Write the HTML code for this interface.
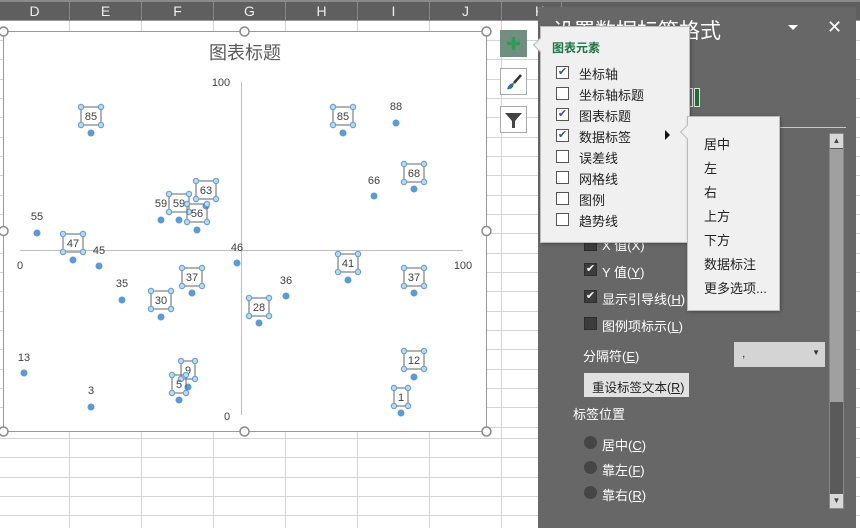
<!DOCTYPE html>
<html><head><meta charset="utf-8"><style>
*{margin:0;padding:0;box-sizing:border-box}
body{width:860px;height:528px;overflow:hidden;background:#fff;position:relative;font-family:"Liberation Sans","Noto Sans CJK SC",sans-serif}
.a{position:absolute;white-space:nowrap}
.hdr{left:0;top:0;width:860px;height:21px;background:#5f5f5f;border-top:2px solid #8a8a8a;border-bottom:1px solid #9a9a9a}
.col{top:2px;height:19px;color:#eee;font-size:14px;text-align:center;line-height:19px;border-right:1px solid #888}
.panel{left:538px;top:7px;width:318px;height:521px;background:#676767;color:#fff}
.pt{font-size:13px;color:#fff}
.cb{width:13px;height:13px;background:#3c3c3c;border:1px solid #2e2e2e}
.pop{background:#f0f0f0;border:1px solid #bbb;box-shadow:1px 1px 3px rgba(0,0,0,.3)}
.it{font-size:13px;color:#222}
.wcb{width:13px;height:13px;border:1px solid #555;background:#fff}
</style></head><body>
<svg class="a" style="left:0;top:0" width="860" height="528">
<g stroke="#d4d4d4" stroke-width="1">
<line x1="0" y1="438.5" x2="860" y2="438.5"/><line x1="0" y1="457.5" x2="860" y2="457.5"/><line x1="0" y1="477.5" x2="860" y2="477.5"/><line x1="0" y1="496.5" x2="860" y2="496.5"/><line x1="0" y1="515.5" x2="860" y2="515.5"/>
<line x1="0" y1="40.5" x2="860" y2="40.5"/><line x1="0" y1="59.5" x2="860" y2="59.5"/><line x1="0" y1="79.5" x2="860" y2="79.5"/><line x1="0" y1="98.5" x2="860" y2="98.5"/><line x1="0" y1="117.5" x2="860" y2="117.5"/><line x1="0" y1="137.5" x2="860" y2="137.5"/><line x1="0" y1="156.5" x2="860" y2="156.5"/><line x1="0" y1="175.5" x2="860" y2="175.5"/><line x1="0" y1="195.5" x2="860" y2="195.5"/><line x1="0" y1="214.5" x2="860" y2="214.5"/><line x1="0" y1="233.5" x2="860" y2="233.5"/><line x1="0" y1="253.5" x2="860" y2="253.5"/><line x1="0" y1="272.5" x2="860" y2="272.5"/><line x1="0" y1="291.5" x2="860" y2="291.5"/><line x1="0" y1="311.5" x2="860" y2="311.5"/><line x1="0" y1="330.5" x2="860" y2="330.5"/><line x1="0" y1="349.5" x2="860" y2="349.5"/><line x1="0" y1="369.5" x2="860" y2="369.5"/><line x1="0" y1="388.5" x2="860" y2="388.5"/><line x1="0" y1="407.5" x2="860" y2="407.5"/><line x1="0" y1="427.5" x2="860" y2="427.5"/>
<line x1="69.5" y1="20" x2="69.5" y2="528"/><line x1="141.5" y1="20" x2="141.5" y2="528"/><line x1="213.5" y1="20" x2="213.5" y2="528"/><line x1="285.5" y1="20" x2="285.5" y2="528"/><line x1="357.5" y1="20" x2="357.5" y2="528"/><line x1="429.5" y1="20" x2="429.5" y2="528"/><line x1="501.5" y1="20" x2="501.5" y2="528"/>
</g>
<rect x="3.5" y="31.5" width="483" height="400" fill="#fff" stroke="#9a9a9a"/>
<text x="245" y="59" font-size="18" fill="#595959" text-anchor="middle" font-family="Liberation Sans,Noto Sans CJK SC,sans-serif">图表标题</text>
<line x1="241.5" y1="82" x2="241.5" y2="415" stroke="#bfbfbf"/>
<line x1="20" y1="250.5" x2="463" y2="250.5" stroke="#bfbfbf"/>
<g font-size="11" fill="#404040" font-family="Liberation Sans,sans-serif" text-anchor="middle">
<text x="221" y="86">100</text><text x="227" y="420">0</text><text x="20" y="269">0</text><text x="463" y="269">100</text>
<text x="37" y="220">55</text><text x="99" y="254">45</text><text x="122" y="287">35</text><text x="161" y="207">59</text><text x="237" y="251">46</text><text x="286" y="284">36</text><text x="24" y="361">13</text><text x="91" y="394">3</text><text x="396" y="110">88</text><text x="374" y="184">66</text>
</g>
<g fill="#5b9bd5">
<circle cx="91" cy="133" r="3.5"/><circle cx="37" cy="233" r="3.5"/><circle cx="73" cy="260" r="3.5"/><circle cx="99" cy="266" r="3.5"/><circle cx="122" cy="300" r="3.5"/><circle cx="161" cy="317" r="3.5"/><circle cx="192" cy="293" r="3.5"/><circle cx="161" cy="220" r="3.5"/><circle cx="179" cy="220" r="3.5"/><circle cx="197" cy="230" r="3.5"/><circle cx="206" cy="206" r="3.5"/><circle cx="237" cy="263" r="3.5"/><circle cx="259" cy="323" r="3.5"/><circle cx="286" cy="296" r="3.5"/><circle cx="24" cy="373" r="3.5"/><circle cx="91" cy="407" r="3.5"/><circle cx="188" cy="387" r="3.5"/><circle cx="179" cy="400" r="3.5"/><circle cx="343" cy="133" r="3.5"/><circle cx="396" cy="123" r="3.5"/><circle cx="374" cy="196" r="3.5"/><circle cx="414" cy="189" r="3.5"/><circle cx="348" cy="280" r="3.5"/><circle cx="414" cy="293" r="3.5"/><circle cx="414" cy="377" r="3.5"/><circle cx="401" cy="413" r="3.5"/>
</g>
<g font-size="11" fill="#404040" font-family="Liberation Sans,sans-serif" text-anchor="middle">
<g transform="translate(91,116)"><rect x="-10" y="-9" width="20" height="18" fill="none" stroke="#666"/><text y="4">85</text><g fill="#bdd7ee" stroke="#5b9bd5"><circle cx="-10" cy="-9" r="2.7"/><circle cx="10" cy="-9" r="2.7"/><circle cx="-10" cy="9" r="2.7"/><circle cx="10" cy="9" r="2.7"/></g></g>
<g transform="translate(73,243)"><rect x="-10" y="-9" width="20" height="18" fill="none" stroke="#666"/><text y="4">47</text><g fill="#bdd7ee" stroke="#5b9bd5"><circle cx="-10" cy="-9" r="2.7"/><circle cx="10" cy="-9" r="2.7"/><circle cx="-10" cy="9" r="2.7"/><circle cx="10" cy="9" r="2.7"/></g></g>
<g transform="translate(161,300)"><rect x="-10" y="-9" width="20" height="18" fill="none" stroke="#666"/><text y="4">30</text><g fill="#bdd7ee" stroke="#5b9bd5"><circle cx="-10" cy="-9" r="2.7"/><circle cx="10" cy="-9" r="2.7"/><circle cx="-10" cy="9" r="2.7"/><circle cx="10" cy="9" r="2.7"/></g></g>
<g transform="translate(192,277)"><rect x="-10" y="-9" width="20" height="18" fill="none" stroke="#666"/><text y="4">37</text><g fill="#bdd7ee" stroke="#5b9bd5"><circle cx="-10" cy="-9" r="2.7"/><circle cx="10" cy="-9" r="2.7"/><circle cx="-10" cy="9" r="2.7"/><circle cx="10" cy="9" r="2.7"/></g></g>
<g transform="translate(179,203)"><rect x="-10" y="-9" width="20" height="18" fill="none" stroke="#666"/><text y="4">59</text><g fill="#bdd7ee" stroke="#5b9bd5"><circle cx="-10" cy="-9" r="2.7"/><circle cx="10" cy="-9" r="2.7"/><circle cx="-10" cy="9" r="2.7"/><circle cx="10" cy="9" r="2.7"/></g></g>
<g transform="translate(197,213)"><rect x="-10" y="-9" width="20" height="18" fill="none" stroke="#666"/><text y="4">56</text><g fill="#bdd7ee" stroke="#5b9bd5"><circle cx="-10" cy="-9" r="2.7"/><circle cx="10" cy="-9" r="2.7"/><circle cx="-10" cy="9" r="2.7"/><circle cx="10" cy="9" r="2.7"/></g></g>
<g transform="translate(206,190)"><rect x="-10" y="-9" width="20" height="18" fill="none" stroke="#666"/><text y="4">63</text><g fill="#bdd7ee" stroke="#5b9bd5"><circle cx="-10" cy="-9" r="2.7"/><circle cx="10" cy="-9" r="2.7"/><circle cx="-10" cy="9" r="2.7"/><circle cx="10" cy="9" r="2.7"/></g></g>
<g transform="translate(259,307)"><rect x="-10" y="-9" width="20" height="18" fill="none" stroke="#666"/><text y="4">28</text><g fill="#bdd7ee" stroke="#5b9bd5"><circle cx="-10" cy="-9" r="2.7"/><circle cx="10" cy="-9" r="2.7"/><circle cx="-10" cy="9" r="2.7"/><circle cx="10" cy="9" r="2.7"/></g></g>
<g transform="translate(188,370)"><rect x="-7" y="-9" width="14" height="18" fill="none" stroke="#666"/><text y="4">9</text><g fill="#bdd7ee" stroke="#5b9bd5"><circle cx="-7" cy="-9" r="2.7"/><circle cx="7" cy="-9" r="2.7"/><circle cx="-7" cy="9" r="2.7"/><circle cx="7" cy="9" r="2.7"/></g></g>
<g transform="translate(179,384)"><rect x="-7" y="-9" width="14" height="18" fill="none" stroke="#666"/><text y="4">5</text><g fill="#bdd7ee" stroke="#5b9bd5"><circle cx="-7" cy="-9" r="2.7"/><circle cx="7" cy="-9" r="2.7"/><circle cx="-7" cy="9" r="2.7"/><circle cx="7" cy="9" r="2.7"/></g></g>
<g transform="translate(343,116)"><rect x="-10" y="-9" width="20" height="18" fill="none" stroke="#666"/><text y="4">85</text><g fill="#bdd7ee" stroke="#5b9bd5"><circle cx="-10" cy="-9" r="2.7"/><circle cx="10" cy="-9" r="2.7"/><circle cx="-10" cy="9" r="2.7"/><circle cx="10" cy="9" r="2.7"/></g></g>
<g transform="translate(414,173)"><rect x="-10" y="-9" width="20" height="18" fill="none" stroke="#666"/><text y="4">68</text><g fill="#bdd7ee" stroke="#5b9bd5"><circle cx="-10" cy="-9" r="2.7"/><circle cx="10" cy="-9" r="2.7"/><circle cx="-10" cy="9" r="2.7"/><circle cx="10" cy="9" r="2.7"/></g></g>
<g transform="translate(348,263)"><rect x="-10" y="-9" width="20" height="18" fill="none" stroke="#666"/><text y="4">41</text><g fill="#bdd7ee" stroke="#5b9bd5"><circle cx="-10" cy="-9" r="2.7"/><circle cx="10" cy="-9" r="2.7"/><circle cx="-10" cy="9" r="2.7"/><circle cx="10" cy="9" r="2.7"/></g></g>
<g transform="translate(414,277)"><rect x="-10" y="-9" width="20" height="18" fill="none" stroke="#666"/><text y="4">37</text><g fill="#bdd7ee" stroke="#5b9bd5"><circle cx="-10" cy="-9" r="2.7"/><circle cx="10" cy="-9" r="2.7"/><circle cx="-10" cy="9" r="2.7"/><circle cx="10" cy="9" r="2.7"/></g></g>
<g transform="translate(414,360)"><rect x="-10" y="-9" width="20" height="18" fill="none" stroke="#666"/><text y="4">12</text><g fill="#bdd7ee" stroke="#5b9bd5"><circle cx="-10" cy="-9" r="2.7"/><circle cx="10" cy="-9" r="2.7"/><circle cx="-10" cy="9" r="2.7"/><circle cx="10" cy="9" r="2.7"/></g></g>
<g transform="translate(401,397)"><rect x="-7" y="-9" width="14" height="18" fill="none" stroke="#666"/><text y="4">1</text><g fill="#bdd7ee" stroke="#5b9bd5"><circle cx="-7" cy="-9" r="2.7"/><circle cx="7" cy="-9" r="2.7"/><circle cx="-7" cy="9" r="2.7"/><circle cx="7" cy="9" r="2.7"/></g></g>
</g>
<g fill="#fff" stroke="#8a8a8a" stroke-width="1.5">
<circle cx="3.5" cy="31.5" r="4.5"/><circle cx="244.5" cy="31.5" r="4.5"/><circle cx="486.5" cy="31.5" r="4.5"/><circle cx="3.5" cy="231" r="4.5"/><circle cx="486.5" cy="231" r="4.5"/><circle cx="3.5" cy="431.5" r="4.5"/><circle cx="244.5" cy="431.5" r="4.5"/><circle cx="486.5" cy="431.5" r="4.5"/>
</g>
<rect x="500" y="30" width="27" height="27" fill="#6f9080"/>
<path d="M513.5 37v13M507 43.5h13" stroke="#2e9b58" stroke-width="3.5"/>
<rect x="500.5" y="68.5" width="26" height="26" fill="#fff" stroke="#aaa"/>
<path d="M507 89q2-6 7-6l-1 4q-3 3-6 2z" fill="#2f6db3"/><path d="M514 83l7-8" stroke="#333" stroke-width="2.5"/>
<rect x="500.5" y="106.5" width="26" height="26" fill="#fff" stroke="#aaa"/>
<path d="M505 113h17l-7 8v7h-3v-7z" fill="#444"/>
</svg>
<div class="a hdr"></div>
<div class="a col" style="left:0;width:70px">D</div>
<div class="a col" style="left:70px;width:72px">E</div>
<div class="a col" style="left:142px;width:72px">F</div>
<div class="a col" style="left:214px;width:72px">G</div>
<div class="a col" style="left:286px;width:72px">H</div>
<div class="a col" style="left:358px;width:72px">I</div>
<div class="a col" style="left:430px;width:72px">J</div>
<div class="a col" style="left:502px;width:60px;text-align:left;padding-left:33px">K</div>

<div class="a panel">
<div class="a" style="left:15px;top:8px;font-size:21px;color:#fff">设置数据标签格式</div>
<div class="a" style="left:250px;top:18px;width:0;height:0;border-left:5px solid transparent;border-right:5px solid transparent;border-top:5px solid #fff"></div>
<div class="a" style="left:289px;top:10px;font-size:18px;color:#fff">✕</div>
<div class="a" style="left:150px;top:81px;width:5px;height:19px;border:1px solid #ddd"></div>
<div class="a" style="left:156px;top:81px;width:6px;height:19px;background:#1e6b3c;border:1px solid #ddd"></div>
<div class="a" style="left:145px;top:120px;width:163px;height:1px;background:#c8c8c8"></div>
<div class="a" style="left:291px;top:126px;width:15px;height:376px;background:#5a5a5a;border:1px solid #888"></div>
<div class="a" style="left:292px;top:142px;width:13px;height:253px;background:#a0a0a0"></div>
<div class="a" style="left:292px;top:127px;width:13px;height:14px;background:#d8d8d8;color:#444;font-size:8px;text-align:center;line-height:14px">▲</div>
<div class="a" style="left:292px;top:487px;width:13px;height:14px;background:#d8d8d8;color:#444;font-size:8px;text-align:center;line-height:14px">▼</div>
<div class="a cb" style="left:46px;top:231px"></div><div class="a pt" style="left:64px;top:228px">X 值(X)</div>
<div class="a cb" style="left:46px;top:256px;color:#fff;font-size:11px;line-height:11px;text-align:center">✔</div><div class="a pt" style="left:64px;top:255px">Y 值(<u>Y</u>)</div>
<div class="a cb" style="left:46px;top:283px;color:#fff;font-size:11px;line-height:11px;text-align:center">✔</div><div class="a pt" style="left:64px;top:282px">显示引导线(<u>H</u>)</div>
<div class="a cb" style="left:46px;top:310px"></div><div class="a pt" style="left:64px;top:309px">图例项标示(<u>L</u>)</div>
<div class="a pt" style="left:45px;top:339px">分隔符(<u>E</u>)</div>
<div class="a" style="left:196px;top:335px;width:91px;height:25px;background:#d4d4d4;color:#333;font-size:12px;padding:4px 8px">,<span style="position:absolute;right:5px;top:6px;font-size:8px">▼</span></div>
<div class="a" style="left:46px;top:366px;width:105px;height:24px;background:#e1e1e1;color:#222;font-size:12.5px;padding:4px 0 0 8px">重设标签文本(<u>R</u>)</div>
<div class="a pt" style="left:35px;top:397px">标签位置</div>
<div class="a" style="left:46px;top:429px;width:13px;height:13px;border-radius:50%;background:#454545"></div><div class="a pt" style="left:64px;top:428px">居中(<u>C</u>)</div>
<div class="a" style="left:46px;top:454px;width:13px;height:13px;border-radius:50%;background:#454545"></div><div class="a pt" style="left:64px;top:453px">靠左(<u>F</u>)</div>
<div class="a" style="left:46px;top:479px;width:13px;height:13px;border-radius:50%;background:#454545"></div><div class="a pt" style="left:64px;top:478px">靠右(<u>R</u>)</div>
</div>

<div class="a pop" style="left:540px;top:26px;width:150px;height:217px">
<div class="a" style="left:11px;top:12px;font-size:12px;font-weight:bold;color:#217346">图表元素</div>
<div class="a wcb" style="left:15px;top:39px;color:#2b579a;font-size:11px;line-height:11px;text-align:center">✔</div><div class="a it" style="left:38px;top:37px">坐标轴</div>
<div class="a wcb" style="left:15px;top:60px"></div><div class="a it" style="left:38px;top:58px">坐标轴标题</div>
<div class="a wcb" style="left:15px;top:81px;color:#2b579a;font-size:11px;line-height:11px;text-align:center">✔</div><div class="a it" style="left:38px;top:79px">图表标题</div>
<div class="a wcb" style="left:15px;top:102px;color:#2b579a;font-size:11px;line-height:11px;text-align:center">✔</div><div class="a it" style="left:38px;top:100px">数据标签</div>
<div class="a" style="left:124px;top:103px;width:0;height:0;border-top:5px solid transparent;border-bottom:5px solid transparent;border-left:5px solid #111"></div>
<div class="a wcb" style="left:15px;top:123px"></div><div class="a it" style="left:38px;top:121px">误差线</div>
<div class="a wcb" style="left:15px;top:144px"></div><div class="a it" style="left:38px;top:142px">网格线</div>
<div class="a wcb" style="left:15px;top:165px"></div><div class="a it" style="left:38px;top:163px">图例</div>
<div class="a wcb" style="left:15px;top:186px"></div><div class="a it" style="left:38px;top:184px">趋势线</div>
</div>
<div class="a" style="left:535px;top:40px;width:10px;height:10px;background:#f0f0f0;border-left:1px solid #bbb;border-bottom:1px solid #bbb;transform:rotate(45deg)"></div>

<div class="a pop" style="left:687px;top:116px;width:93px;height:195px">
<div class="a it" style="left:16px;top:17px">居中</div>
<div class="a it" style="left:16px;top:41px">左</div>
<div class="a it" style="left:16px;top:65px">右</div>
<div class="a it" style="left:16px;top:89px">上方</div>
<div class="a it" style="left:16px;top:113px">下方</div>
<div class="a it" style="left:16px;top:137px">数据标注</div>
<div class="a it" style="left:16px;top:161px">更多选项...</div>
</div>
<div class="a" style="left:682px;top:127px;width:10px;height:10px;background:#f0f0f0;border-left:1px solid #bbb;border-bottom:1px solid #bbb;transform:rotate(45deg)"></div>
</body></html>
